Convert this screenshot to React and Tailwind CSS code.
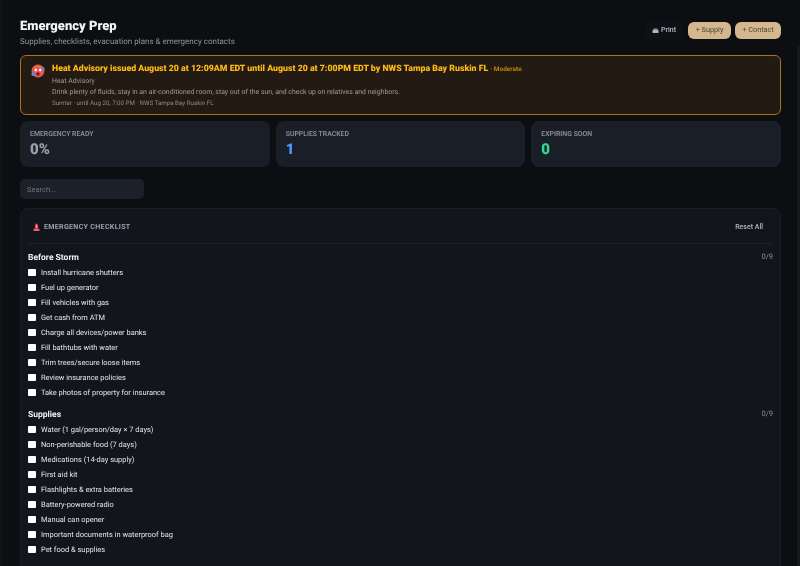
const before = ["Install hurricane shutters","Fuel up generator","Fill vehicles with gas","Get cash from ATM","Charge all devices/power banks","Fill bathtubs with water","Trim trees/secure loose items","Review insurance policies","Take photos of property for insurance"];
const supplies = ["Water (1 gal/person/day × 7 days)","Non-perishable food (7 days)","Medications (14-day supply)","First aid kit","Flashlights & extra batteries","Battery-powered radio","Manual can opener","Important documents in waterproof bag","Pet food & supplies"];

function Stat({ label, value, color }) {
  return (
    <div className="flex-1 h-[46px] rounded-[8px] bg-[#1a1e26] px-[10px] pt-[8px]">
      <div className="text-[6.9px] leading-[10px] font-semibold text-[#8a8f99]">{label}</div>
      <div className={`mt-[1px] text-[15px] leading-[18px] font-black ${color}`}>{value}</div>
    </div>
  );
}

function Group({ title, items }) {
  return (
    <div>
      <div className="flex justify-between">
        <div className="text-[8.5px] leading-[12px] font-bold text-[#f0f2f5]">{title}</div>
        <div className="text-[7.5px] leading-[10px] text-[#8a8f99]">0/9</div>
      </div>
      <div className="mt-[1px] flex flex-col">
        {items.map((t) => (
          <div key={t} className="flex h-[15px] items-center">
            <span className="h-[7.5px] w-[7.5px] rounded-[1px] bg-white shrink-0" />
            <span className="ml-[5.5px] text-[7.45px] leading-[10px] text-[#e4e6ea] whitespace-nowrap">{t}</span>
          </div>
        ))}
      </div>
    </div>
  );
}

export default function App() {
  return (
    <div className="relative h-[566px] w-[800px] overflow-hidden bg-[#0c0e12] font-['Roboto',sans-serif] antialiased [text-rendering:geometricPrecision] [will-change:transform]">
      <div className="h-full pl-[20px] pr-[19px] pt-[18px]">
        <div className="flex items-start justify-between">
          <div className="pt-[1px]">
            <h1 className="text-[13px] leading-[16px] font-black text-[#f3f5f8]">Emergency Prep</h1>
            <p className="mt-[1px] text-[8px] leading-[12px] text-[#8f949d]">Supplies, checklists, evacuation plans &amp; emergency contacts</p>
          </div>
          <div className="mt-[4px] flex items-center gap-[4px]">
            <button className="mr-[2px] flex h-[17px] w-[36px] items-center justify-center gap-[2px] rounded-[4px] bg-[#0f1116] text-[7px] font-medium text-[#b9bdc6]">
              <svg width="7" height="6" viewBox="0 0 7 6"><rect x="1.5" y="0.5" width="4" height="2" fill="#8e929a"/><rect x="0.5" y="2" width="6" height="3" fill="#b0b4bb"/></svg>
              Print
            </button>
            <button className="h-[17px] w-[43px] rounded-[6px] bg-[#d4b78f] text-[7.3px] text-[#4d4334]">+ Supply</button>
            <button className="h-[17px] w-[46px] rounded-[6px] bg-[#d4b78f] text-[7.3px] text-[#4d4334]">+ Contact</button>
          </div>
        </div>

        <div className="mt-[7px] flex h-[60px] rounded-[6px] border border-[#a8761a] bg-[#221a13] pl-[10px] pt-[8px]">
          <svg className="shrink-0" width="14" height="14" viewBox="0 0 14 14">
            <circle cx="7" cy="7" r="6.5" fill="#e8584f"/>
            <path d="M1 5 C2 1 12 1 13 5 C10 3 4 3 1 5Z" fill="#e8723c"/>
            <rect x="0.5" y="8" width="3" height="4" rx="1.5" fill="#4d8ee8"/>
            <rect x="10.5" y="3" width="3" height="3" rx="1.5" fill="#4d8ee8"/>
            <circle cx="4.8" cy="6" r="1.2" fill="#fff"/><circle cx="9.2" cy="6" r="1.2" fill="#fff"/>
            <ellipse cx="7" cy="10" rx="1.6" ry="1.8" fill="#5a1b2a"/>
          </svg>
          <div className="ml-[7px] min-w-0">
            <div className="flex items-baseline whitespace-nowrap">
              <span className="text-[8.75px] leading-[11px] font-black text-[#fdb913]">Heat Advisory issued August 20 at 12:09AM EDT until August 20 at 7:00PM EDT by NWS Tampa Bay Ruskin FL</span>
              <span className="ml-[2px] text-[6.5px] leading-[11px] font-bold text-[#b8860b]">· Moderate</span>
            </div>
            <div className="mt-[0.5px] text-[6.9px] leading-[11px] text-[#a09c95]">Heat Advisory</div>
            <div className="text-[6.9px] leading-[11px] text-[#a09c95]">Drink plenty of fluids, stay in an air-conditioned room, stay out of the sun, and check up on relatives and neighbors.</div>
            <div className="text-[6.2px] leading-[11px] text-[#8f8b84]">Sumter · until Aug 20, 7:00 PM · NWS Tampa Bay Ruskin FL</div>
          </div>
        </div>

        <div className="mt-[6px] flex gap-[6px]">
          <Stat label="EMERGENCY READY" value="0%" color="text-[#9aa0ab]" />
          <Stat label="SUPPLIES TRACKED" value="1" color="text-[#4c9aff]" />
          <Stat label="EXPIRING SOON" value="0" color="text-[#2fdc96]" />
        </div>

        <input
          readOnly
          placeholder="Search..."
          className="mt-[12px] block h-[20px] w-[124px] rounded-[5px] bg-[#1c2028] px-[7px] text-[7.5px] text-[#d5d8de] placeholder:text-[#6d727c] outline-none"
        />

        <div className="mt-[9px] rounded-t-[8px] border border-[#1a1e25] bg-[#12151b] pl-[7px] pr-[7px] pb-[20px]">
          <div className="flex h-[35px] items-center justify-between border-b border-[#1c2027] pl-[5px] pr-[2px] pt-[2px]">
            <div className="flex items-center gap-[4px]">
              <svg width="7" height="8" viewBox="0 0 7 8"><rect x="0.5" y="6" width="6" height="2" fill="#e25c8a"/><path d="M1.5 6 L2 1.5 C2.5 0 4.5 0 5 1.5 L5.5 6Z" fill="#d93a3a"/><rect x="3" y="2" width="1" height="3" fill="#f3b0a0"/></svg>
              <span className="text-[7.1px] font-bold tracking-[0.3px] text-[#99a0ad]">EMERGENCY CHECKLIST</span>
            </div>
            <button className="h-[18px] rounded-[5px] bg-[#11141a] px-[8px] text-[7px] font-medium text-[#b5b9c2]">Reset All</button>
          </div>
          <div className="mt-[8px] flex flex-col gap-[9px]">
            <Group title="Before Storm" items={before} />
            <Group title="Supplies" items={supplies} />
          </div>
        </div>
      </div>
      <div className="absolute right-0 top-[45px] bottom-0 w-[3px] bg-[#15181c]" />
      <div className="absolute left-0 top-0 bottom-0 w-[3px] bg-[#0f1115]" />
    </div>
  );
}
